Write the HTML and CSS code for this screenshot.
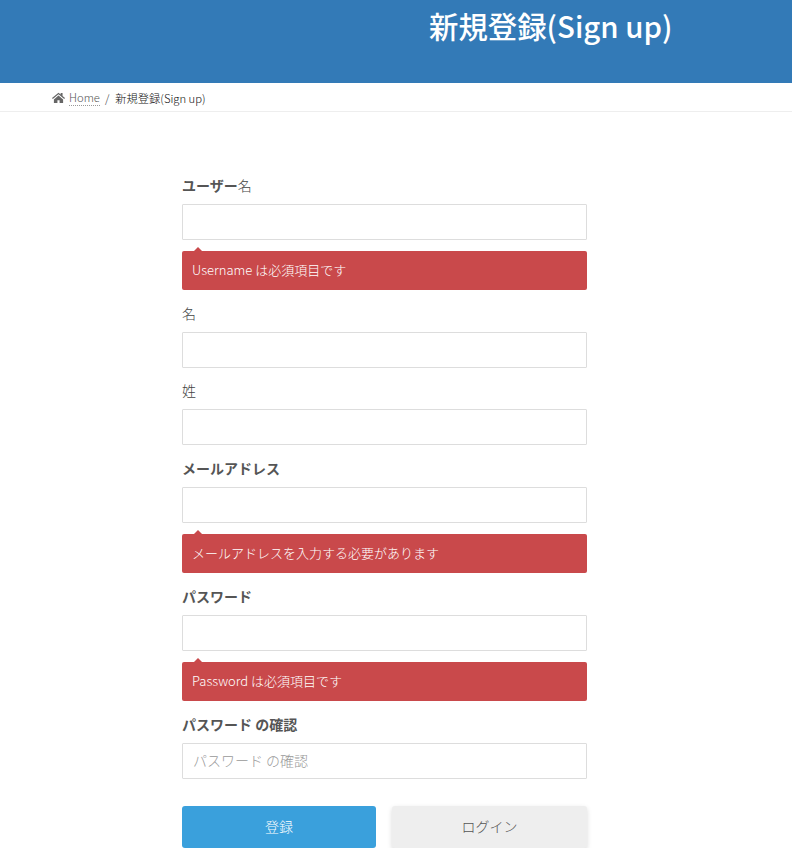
FILE: index.html
```html
<!DOCTYPE html>
<html lang="ja">
<head>
  <meta charset="UTF-8">
  <title>新規登録(Sign up)</title>
  <link rel="stylesheet" href="styles.css">
</head>
<body>

<header class="page-header">
  <h1>新規登録(Sign up)</h1>
</header>

<nav class="breadcrumb">
  <svg class="home-icon" viewBox="0 0 24 20" width="13" height="11">
    <path fill="#666" d="M12 1 0 11l1.5 1.8L12 4.2l10.500 8.600L24 11l-4.500-3.700V1.500h-3.500v2.900zM3.500 13.500V20H10v-5h4v5h6.500v-6.500L12 6.500z"/>
  </svg>
  <a class="crumb-link">Home</a>
  <span class="crumb-sep">/</span>
  <span class="crumb-current">新規登録(Sign up)</span>
</nav>

<form class="signup">
  <div class="field">
    <label><strong>ユーザー</strong>名</label>
    <input type="text">
    <div class="error">Username は必須項目です</div>
  </div>
  <div class="field">
    <label>名</label>
    <input type="text">
  </div>
  <div class="field">
    <label>姓</label>
    <input type="text">
  </div>
  <div class="field">
    <label><strong>メールアドレス</strong></label>
    <input type="text">
    <div class="error">メールアドレスを入力する必要があります</div>
  </div>
  <div class="field">
    <label><strong>パスワード</strong></label>
    <input type="password">
    <div class="error">Password は必須項目です</div>
  </div>
  <div class="field">
    <label><strong>パスワード の確認</strong></label>
    <input type="password" placeholder="パスワード の確認">
  </div>
  <div class="buttons">
    <button type="button" class="btn btn-primary">登録</button>
    <button type="button" class="btn btn-login">ログイン</button>
  </div>
</form>

</body>
</html>
```

FILE: styles.css
```css
body {
  margin: 0;
  font-family: "Noto Sans CJK JP", sans-serif;
  font-size: 14px;
  font-weight: 300;
  color: #444;
  background: #fff;
}

strong {
  font-weight: 700;
  color: #555;
}

.page-header {
  height: 83px;
  background: #337ab7;
  box-sizing: border-box;
  padding: 5px 0 0 429px;
}

.page-header h1 {
  margin: 0;
  font-size: 29.400px;
  line-height: 40px;
  font-weight: 500;
  color: #fff;
}

.breadcrumb {
  border-bottom: 1px solid #eee;
  padding: 2px 0 0 52px;
  box-sizing: border-box;
  height: 29px;
  display: flex;
  align-items: center;
  font-size: 11.250px;
}

.home-icon {
  margin: -2px 4px 0 0;
}

.crumb-link {
  color: #555;
  border-bottom: 1px dotted #999;
  line-height: 15px;
}

.crumb-sep {
  margin: 0 6px 0 5px;
  color: #333;
}

.crumb-current {
  color: #111;
}

.signup {
  width: 405px;
  margin: 64.900px 0 0 182px;
}

.field {
  margin-bottom: 14.500px;
}

.field label {
  display: block;
  height: 20px;
  line-height: 17px;
  margin-bottom: 7px;
}

.field input {
  display: block;
  width: 100%;
  height: 36px;
  box-sizing: border-box;
  border: 1px solid #ddd;
  border-radius: 1px;
  padding: 0 10px 2px;
  font: inherit;
  color: #555;
  background: #fff;
}

.field input::placeholder {
  color: #999;
}

.error {
  position: relative;
  height: 39.500px;
  margin-top: 11px;
  padding-left: 10px;
  line-height: 38px;
  font-size: 13px;
  color: #fff;
  background: #c9494b;
  border-radius: 2px;
}

.error::before {
  content: "";
  position: absolute;
  left: 12px;
  top: -4px;
  border-left: 4px solid transparent;
  border-right: 4px solid transparent;
  border-bottom: 4px solid #c9494b;
}

.buttons {
  display: flex;
  justify-content: space-between;
  margin-top: 27px;
}

.btn {
  height: 42px;
  border: none;
  border-radius: 3px;
  padding-bottom: 3px;
  font: inherit;
}

.btn-primary {
  width: 194px;
  background: #3aa0dc;
  color: #fff;
}

.btn-login {
  width: 195px;
  background: #eee;
  color: #555;
  box-shadow: 0 2px 5px rgba(0,0,0,0.15);
}
```
